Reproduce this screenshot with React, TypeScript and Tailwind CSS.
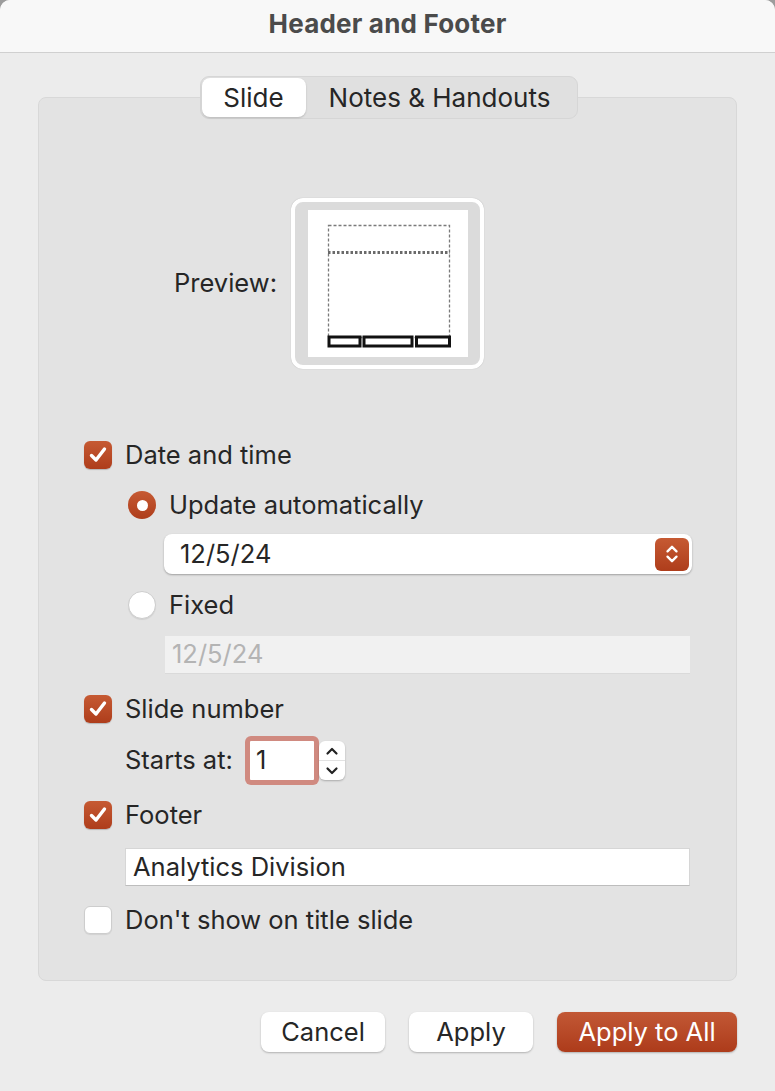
import React from 'react';

const font = { fontFamily: 'Inter, "Noto Sans", "Liberation Sans", sans-serif' };

function CheckBox({ checked }: { checked: boolean }) {
  if (!checked) {
    return (
      <div className="w-[28px] h-[28px] rounded-[6px] bg-white border border-[#cdcdcd] shadow-[0_1px_1px_rgba(0,0,0,0.08)] shrink-0" />
    );
  }
  return (
    <div className="w-[28px] h-[28px] rounded-[6px] bg-gradient-to-b from-[#c65a33] to-[#ae3d1b] shadow-[0_1px_1px_rgba(0,0,0,0.2)] flex items-center justify-center shrink-0">
      <svg width="20" height="20" viewBox="0 0 20 20" fill="none">
        <path d="M3.5 10.5 L8 15 L16.5 4" stroke="white" strokeWidth="3.4" strokeLinecap="round" strokeLinejoin="round" />
      </svg>
    </div>
  );
}

function Radio({ checked }: { checked: boolean }) {
  if (!checked) {
    return <div className="w-[28px] h-[28px] rounded-full bg-white border border-[#cdcdcd] shadow-[0_1px_1px_rgba(0,0,0,0.08)] shrink-0" />;
  }
  return (
    <div className="w-[28px] h-[28px] rounded-full bg-gradient-to-b from-[#c65a33] to-[#ae3d1b] flex items-center justify-center shrink-0">
      <div className="w-[11px] h-[11px] rounded-full bg-white" />
    </div>
  );
}

function Chevrons({ color, size = 20 }: { color: string; size?: number }) {
  return (
    <svg width={size} height={size + 4} viewBox="0 0 20 24" fill="none">
      <path d="M5 9 L10 4 L15 9" stroke={color} strokeWidth="2.6" strokeLinecap="round" strokeLinejoin="round" />
      <path d="M5 15 L10 20 L15 15" stroke={color} strokeWidth="2.6" strokeLinecap="round" strokeLinejoin="round" />
    </svg>
  );
}

function SlidePreview() {
  return (
    <svg width="160" height="147" viewBox="0 0 160 147">
      <rect x="0" y="0" width="160" height="147" fill="white" />
      <rect x="20.5" y="15.5" width="121" height="112" fill="none" stroke="#7a7a7a" strokeWidth="1.3" strokeDasharray="3 2" />
      <line x1="20" y1="42.5" x2="142" y2="42.5" stroke="#6a6a6a" strokeWidth="2.8" strokeDasharray="2.5 2" />
      <rect x="21" y="127" width="31" height="9" fill="white" stroke="#111" strokeWidth="3" />
      <rect x="56" y="127" width="48" height="9" fill="white" stroke="#111" strokeWidth="3" />
      <rect x="108.5" y="127" width="33" height="9" fill="white" stroke="#111" strokeWidth="3" />
    </svg>
  );
}

export default function App() {
  return (
    <div className="w-[775px] h-[1091px] bg-[#9c9c9c]" style={font}>
      <div className="w-full h-full rounded-t-[10px] overflow-hidden bg-[#ececec] flex flex-col text-[#262626]">
        {/* title bar */}
        <div className="h-[53px] shrink-0 bg-[#f8f8f8] border-b border-[#d0d0d0] flex items-center justify-center pb-[6px]">
          <span className="text-[26px] font-bold text-[#4b4b4b] tracking-[0.2px]">Header and Footer</span>
        </div>

        <div className="px-[38px] flex flex-col">
          {/* tabs */}
          <div className="relative z-10 mt-[23px] flex justify-center">
            <div className="h-[43px] w-[378px] ml-[2px] rounded-[9px] bg-[#e0e0e0] border border-[#d6d6d6] flex items-center px-[1px]">
              <div className="h-[39px] w-[104px] rounded-[8px] bg-white shadow-[0_1px_2px_rgba(0,0,0,0.18)] flex items-center justify-center text-[26px]">
                Slide
              </div>
              <div className="flex-1 flex items-center justify-center text-[26px] pr-[2px]">Notes &amp; Handouts</div>
            </div>
          </div>

          {/* group box */}
          <div className="-mt-[22px] h-[884px] rounded-[8px] bg-[#e3e3e3] border border-[#d8d8d8] flex flex-col text-[25.5px]">
            <div className="mt-[100px] flex items-center pl-[131px]">
              <span className="w-[107px] text-right">Preview:</span>
              <div className="ml-[14px] w-[193px] h-[171px] rounded-[12px] border-[4px] border-white bg-[#dbdbdb] shadow-[0_0_1px_rgba(0,0,0,0.25)] flex items-center justify-center">
                <SlidePreview />
              </div>
            </div>

            <div className="mt-[66px] h-[40px] flex items-center pl-[45px] gap-[13px]">
              <CheckBox checked />
              <span>Date and time</span>
            </div>

            <div className="mt-[10px] h-[40px] flex items-center pl-[89px] gap-[13px]">
              <Radio checked />
              <span>Update automatically</span>
            </div>

            <div className="mt-[9px] ml-[125px] w-[528px] h-[40px] rounded-[8px] bg-white shadow-[0_1px_2px_rgba(0,0,0,0.3)] flex items-center justify-between pl-[16px] pr-[3px]">
              <span>12/5/24</span>
              <div className="w-[34px] h-[33px] rounded-[6px] bg-gradient-to-b from-[#c65a33] to-[#ae3d1b] flex items-center justify-center">
                <Chevrons color="white" size={18} />
              </div>
            </div>

            <div className="mt-[11px] h-[40px] flex items-center pl-[89px] gap-[13px]">
              <Radio checked={false} />
              <span>Fixed</span>
            </div>

            <div className="mt-[11px] ml-[126px] w-[525px] h-[38px] bg-[#f1f1f1] border-b border-[#dadada] flex items-center pl-[7px] text-[#b4b4b4]">
              12/5/24
            </div>

            <div className="mt-[15px] h-[40px] flex items-center pl-[45px] gap-[13px]">
              <CheckBox checked />
              <span>Slide number</span>
            </div>

            <div className="mt-[7px] h-[49px] flex items-center pl-[86px]">
              <span>Starts at:</span>
              <div className="ml-[12px] w-[74px] h-[49px] rounded-[6px] bg-[#d08a80] p-[5px]">
                <div className="w-full h-full bg-white rounded-[1px] flex items-center pl-[6px]">1</div>
              </div>
              <div className="w-[26px] h-[39px] rounded-[6px] bg-white shadow-[0_1px_2px_rgba(0,0,0,0.25)] flex flex-col">
                <div className="flex-1 flex items-center justify-center border-b border-[#e2e2e2]">
                  <svg width="14" height="10" viewBox="0 0 14 10" fill="none">
                    <path d="M2.5 7.5 L7 3 L11.5 7.5" stroke="#222" strokeWidth="2.2" strokeLinecap="round" strokeLinejoin="round" />
                  </svg>
                </div>
                <div className="flex-1 flex items-center justify-center">
                  <svg width="14" height="10" viewBox="0 0 14 10" fill="none">
                    <path d="M2.5 2.5 L7 7 L11.5 2.5" stroke="#222" strokeWidth="2.2" strokeLinecap="round" strokeLinejoin="round" />
                  </svg>
                </div>
              </div>
            </div>

            <div className="mt-[10px] h-[40px] flex items-center pl-[45px] gap-[13px]">
              <CheckBox checked />
              <span>Footer</span>
            </div>

            <div className="mt-[13px] ml-[86px] w-[565px] h-[38px] bg-white border border-[#d6d6d6] border-b-[#bdbdbd] flex items-center pl-[7px]">
              Analytics Division
            </div>

            <div className="mt-[14px] h-[40px] flex items-center pl-[45px] gap-[13px]">
              <CheckBox checked={false} />
              <span>Don't show on title slide</span>
            </div>
          </div>

          {/* buttons */}
          <div className="mt-[31px] flex justify-end gap-[24px] text-[25.5px]">
            <button className="w-[124px] h-[40px] rounded-[8px] bg-white shadow-[0_1px_2px_rgba(0,0,0,0.25)]">Cancel</button>
            <button className="w-[124px] h-[40px] rounded-[8px] bg-white shadow-[0_1px_2px_rgba(0,0,0,0.25)]">Apply</button>
            <button className="w-[180px] h-[40px] rounded-[8px] bg-gradient-to-b from-[#c25835] to-[#ad3b1a] text-white shadow-[0_1px_2px_rgba(0,0,0,0.25)]">
              Apply to All
            </button>
          </div>
        </div>
      </div>
    </div>
  );
}
